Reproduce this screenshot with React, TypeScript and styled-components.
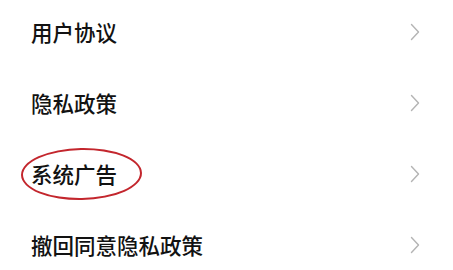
import React from "react"
import styled, { createGlobalStyle } from "styled-components"

const GlobalStyle = createGlobalStyle`
  html, body {
    margin: 0;
    padding: 0;
    background: #ffffff;
    overflow: hidden;
  }
  body {
    font-family: "Noto Sans CJK SC", "Noto Sans", sans-serif;
  }
`

const Page = styled.div`
  width: 453px;
  height: 270px;
  background: #ffffff;
  overflow: hidden;
`

const List = styled.ul`
  list-style: none;
  margin: -4px 0 0;
  padding: 0;
`

const Row = styled.li`
  height: 71px;
  display: flex;
  align-items: center;
  justify-content: space-between;
  padding: 0 33px 0 31px;
`

const Label = styled.span`
  position: relative;
  font-size: 21.5px;
  font-weight: 500;
  line-height: 22px;
  color: #121212;
`

const Mark = styled.span`
  position: absolute;
  left: -10px;
  right: -25px;
  top: -15px;
  bottom: -15px;
  border: 2px solid #c3262d;
  border-radius: 50%;
  transform: rotate(-1deg);
  pointer-events: none;
`

const Chevron = () => (
  <svg width="10" height="18" viewBox="0 0 10 18" fill="none">
    <polyline
      points="1.5,1.5 8.5,9 1.5,16.5"
      stroke="#b4b4b4"
      strokeWidth="1.4"
      strokeLinecap="round"
      strokeLinejoin="round"
    />
  </svg>
)

const items = [
  { title: "用户协议" },
  { title: "隐私政策" },
  { title: "系统广告", marked: true },
  { title: "撤回同意隐私政策" },
]

const App = (): React.ReactElement => (
  <>
    <GlobalStyle />
    <Page>
      <List>
        {items.map((item) => (
          <Row key={item.title}>
            <Label>
              {item.title}
              {item.marked && <Mark />}
            </Label>
            <Chevron />
          </Row>
        ))}
      </List>
    </Page>
  </>
)

export default App
